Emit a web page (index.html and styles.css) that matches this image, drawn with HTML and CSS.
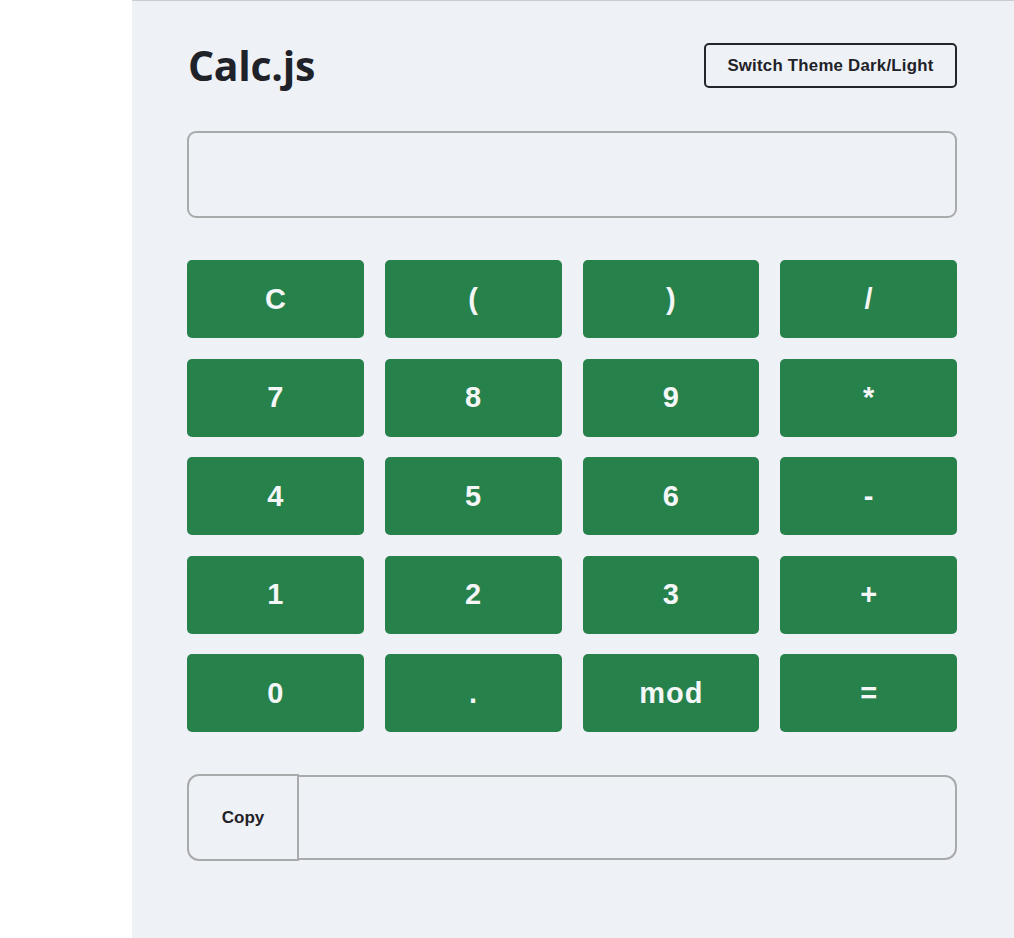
FILE: index.html
```html
<!DOCTYPE html>
<html lang="en">
<head>
<meta charset="utf-8">
<title>Calc.js</title>
<link rel="stylesheet" href="styles.css">
</head>
<body>
<div class="side"></div>
<main class="app">
  <header class="header">
    <h1 class="title">Calc.js</h1>
    <button class="theme-btn">Switch Theme Dark/Light</button>
  </header>
  <div class="display"></div>
  <div class="keys">
    <button class="key">C</button>
    <button class="key">(</button>
    <button class="key">)</button>
    <button class="key">/</button>
    <button class="key">7</button>
    <button class="key">8</button>
    <button class="key">9</button>
    <button class="key">*</button>
    <button class="key">4</button>
    <button class="key">5</button>
    <button class="key">6</button>
    <button class="key">-</button>
    <button class="key">1</button>
    <button class="key">2</button>
    <button class="key">3</button>
    <button class="key">+</button>
    <button class="key">0</button>
    <button class="key">.</button>
    <button class="key">mod</button>
    <button class="key">=</button>
  </div>
  <div class="copy-row">
    <button class="copy-btn">Copy</button>
    <div class="copy-field"></div>
  </div>
</main>
</body>
</html>
```

FILE: styles.css
```css
* { box-sizing: border-box; }
html, body { height: 100%; }
body {
  margin: 0;
  display: flex;
  background: #ffffff;
  font-family: "Liberation Sans", Arial, sans-serif;
}
.side {
  width: 132px;
  flex: none;
}
.app {
  flex: 1;
  background: #eef1f6;
  border-top: 1px solid #c9ccd1;
  padding: 42px 57px 0 55px;
}
.header {
  display: flex;
  justify-content: space-between;
  align-items: center;
  height: 45px;
}
.title {
  margin: 0 0 0 1px;
  font-family: "Open Sans", "Noto Sans", sans-serif;
  font-weight: 700;
  font-size: 41px;
  letter-spacing: -0.3px;
  color: #1f2228;
  line-height: 1;
}
.theme-btn {
  height: 45px;
  width: 253px;
  border: 2px solid #23262b;
  border-radius: 5px;
  background: transparent;
  font-family: "Liberation Sans", Arial, sans-serif;
  font-weight: 700;
  font-size: 16.8px;
  letter-spacing: 0.25px;
  color: #1f2228;
  padding: 0;
}
.display {
  margin-top: 43px;
  height: 87px;
  border: 2px solid #a9aaac;
  border-radius: 9px;
}
.keys {
  margin-top: 42px;
  display: grid;
  grid-template-columns: repeat(4, 1fr);
  column-gap: 21px;
  row-gap: 20.5px;
  grid-auto-rows: 78px;
}
.key {
  background: #27814b;
  border: none;
  border-radius: 5px;
  color: #f4f6f8;
  font-family: "Liberation Sans", Arial, sans-serif;
  font-weight: 700;
  font-size: 29px;
  letter-spacing: 1px;
  text-indent: 1px;
  padding: 0;
}
.copy-row {
  margin-top: 42px;
  display: flex;
  height: 87px;
}
.copy-btn {
  width: 112px;
  flex: none;
  border: 2px solid #a9aaac;
  border-radius: 12px 0 0 12px;
  background: transparent;
  font-family: "Liberation Sans", Arial, sans-serif;
  font-weight: 700;
  font-size: 17px;
  color: #1f2228;
  padding: 0;
}
.copy-field {
  flex: 1;
  margin: 1px 0;
  border: 2px solid #a9aaac;
  border-left: none;
  border-radius: 0 12px 12px 0;
}
```
